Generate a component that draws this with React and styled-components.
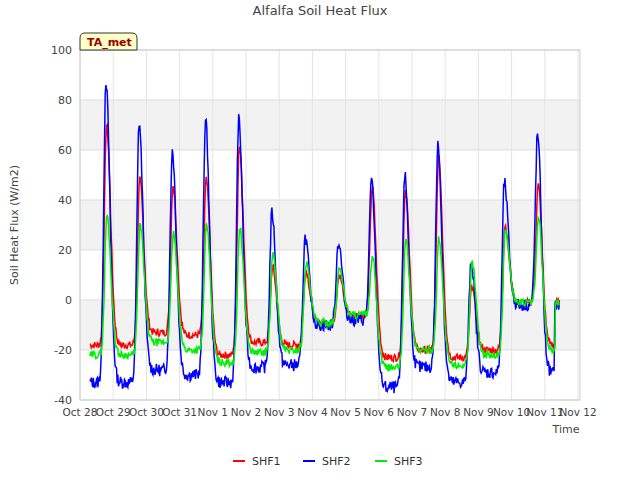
import React from 'react';
import styled, { createGlobalStyle } from 'styled-components';

const Global = createGlobalStyle`
  body { margin: 0; background: #fff; font-family: "DejaVu Sans", sans-serif; }
`;

const Frame = styled.div`
  width: 640px;
  height: 480px;
`;

const X0 = 80, X1 = 580, Y0 = 50, Y1 = 400;
const DAY = (578 - 80) / 15;
const yv = (v) => Y0 + (100 - v) * 2.5;

const peaks = {
  red: [70, 48, 46, 48, 62, 13, 12, 10, 45, 44, 57, 5, 30, 46],
  blue: [88, 71, 60, 72, 72, 35, 25, 23, 48, 50, 62, 16, 47, 66],
  green: [34, 30, 27, 30, 29, 18, 15, 13, 17, 24, 25, 15, 28, 33],
};
const mins = {
  red: [-18, -13, -14, -22, -17, -18, -9, -6, -23, -20, -23, -20, -1, -18],
  blue: [-33, -28, -30, -33, -27, -26, -10, -8, -35, -27, -33, -29, -2, -29],
  green: [-22, -17, -20, -25, -21, -20, -9, -6, -27, -20, -26, -22, -1, -20],
};

function series(key, lag, seed) {
  const p = peaks[key], m = mins[key];
  const pts = [];
  let s = seed;
  const rnd = () => { s = (s * 9301 + 49297) % 233280; return s / 233280 - 0.5; };
  for (let t = 0.3; t <= 14.45; t += 0.02) {
    const d = Math.round(t - 0.78 - lag);
    const di = Math.max(0, Math.min(13, d));
    const ph = t - (d + 0.78 + lag);
    const sig = ph < 0 ? 0.065 : 0.12;
    const g = Math.exp(-(ph * ph) / (2 * sig * sig));
    const base = ph < 0 ? m[Math.max(0, di - 1)] : m[di];
    const v = base + (p[di] - base) * g + rnd() * (key === 'blue' ? 5 : 3);
    pts.push(`${(X0 + t * DAY).toFixed(1)},${yv(v).toFixed(1)}`);
  }
  return pts.join(' ');
}

const days = ['Oct 28', 'Oct 29', 'Oct 30', 'Oct 31', 'Nov 1', 'Nov 2', 'Nov 3', 'Nov 4', 'Nov 5', 'Nov 6', 'Nov 7', 'Nov 8', 'Nov 9', 'Nov 10', 'Nov 11', 'Nov 12'];

export default function App() {
  return (
    <Frame>
      <Global />
      <svg width="640" height="480" fontFamily="DejaVu Sans, sans-serif">
        <text x="320" y="15" textAnchor="middle" fontSize="13" fill="#444">Alfalfa Soil Heat Flux</text>
        <rect x={X0} y={Y0} width={X1 - X0} height={Y1 - Y0} fill="#fff" />
        {[100, 200, 300].map((y) => <rect key={y} x={X0} y={y} width={X1 - X0} height="50" fill="#f2f2f2" />)}
        {[100, 80, 60, 40, 20, 0, -20, -40].map((v) => (
          <g key={v}>
            <line x1={X0} x2={X1} y1={yv(v)} y2={yv(v)} stroke="#ddd" />
            <text x="72" y={yv(v) + 4} textAnchor="end" fontSize="11" fill="#444">{v}</text>
          </g>
        ))}
        {days.map((d, i) => (
          <g key={d}>
            <line x1={X0 + i * DAY} x2={X0 + i * DAY} y1={Y0} y2={Y1} stroke="#e4e4e4" />
            <text x={X0 + i * DAY} y="416" textAnchor="middle" fontSize="10.5" fill="#444">{d}</text>
          </g>
        ))}
        <rect x={X0} y={Y0} width={X1 - X0} height={Y1 - Y0} fill="none" stroke="#ccc" />
        <text x="566" y="433" textAnchor="middle" fontSize="11" fill="#444">Time</text>
        <text transform="translate(18,225) rotate(-90)" textAnchor="middle" fontSize="11" fill="#444">Soil Heat Flux (W/m2)</text>
        <polyline points={series('red', 0.02, 7)} fill="none" stroke="#ff0000" strokeWidth="1.5" />
        <polyline points={series('blue', 0, 13)} fill="none" stroke="#0000ff" strokeWidth="1.5" />
        <polyline points={series('green', 0.03, 29)} fill="none" stroke="#00ee00" strokeWidth="1.5" />
        <path d="M80 50 V38 Q80 33 85 33 H132 Q137 33 137 38 V50 Z" fill="#ffffc8" stroke="#333" />
        <text x="87" y="46" fontSize="11" fontWeight="bold" fill="#990000">TA_met</text>
        {[['SHF1', '#ff0000', 233], ['SHF2', '#0000ff', 303], ['SHF3', '#00ee00', 375]].map(([n, c, x]) => (
          <g key={n}>
            <line x1={x} x2={x + 12} y1="461" y2="461" stroke={c} strokeWidth="2" />
            <text x={x + 19} y="465" fontSize="11" fill="#333">{n}</text>
          </g>
        ))}
      </svg>
    </Frame>
  );
}
